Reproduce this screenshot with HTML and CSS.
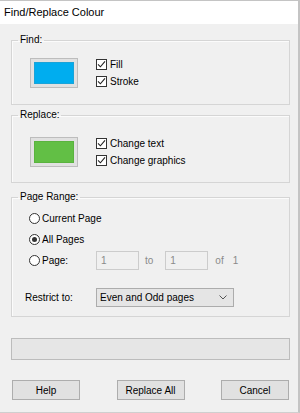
FILE: index.html
```html
<!doctype html>
<html>
  <head>
    <meta charset="utf-8">
    <title>Find/Replace Colour</title>
    <link rel="stylesheet" href="styles.css">
  </head>
  <body>
    <div class="window">
      <div class="titlebar">Find/Replace Colour</div>
      <div class="content">
        <fieldset class="group group-find">
          <legend>Find:</legend>
          <div class="swatch-row">
            <div class="swatch"><div class="swatch-fill blue"></div></div>
            <div class="checks">
              <label class="check-row"><span class="check"><svg width="9" height="9" viewBox="0 0 9 9"><path d="M1 4.3 L3.4 6.8 L8 1.3" fill="none" stroke="#222" stroke-width="1.1"/></svg></span>Fill</label>
              <label class="check-row"><span class="check"><svg width="9" height="9" viewBox="0 0 9 9"><path d="M1 4.3 L3.4 6.8 L8 1.3" fill="none" stroke="#222" stroke-width="1.1"/></svg></span>Stroke</label>
            </div>
          </div>
        </fieldset>

        <fieldset class="group group-replace">
          <legend>Replace:</legend>
          <div class="swatch-row">
            <div class="swatch"><div class="swatch-fill green"></div></div>
            <div class="checks">
              <label class="check-row"><span class="check"><svg width="9" height="9" viewBox="0 0 9 9"><path d="M1 4.3 L3.4 6.8 L8 1.3" fill="none" stroke="#222" stroke-width="1.1"/></svg></span>Change text</label>
              <label class="check-row"><span class="check"><svg width="9" height="9" viewBox="0 0 9 9"><path d="M1 4.3 L3.4 6.8 L8 1.3" fill="none" stroke="#222" stroke-width="1.1"/></svg></span>Change graphics</label>
            </div>
          </div>
        </fieldset>

        <fieldset class="group group-range">
          <legend>Page Range:</legend>
          <div class="range-body">
            <div class="radio-row"><span class="radio"></span>Current Page</div>
            <div class="radio-row"><span class="radio checked"></span>All Pages</div>
            <div class="radio-row">
              <span class="radio-label"><span class="radio"></span>Page:</span>
              <span class="num-box">1</span>
              <span class="muted to">to</span>
              <span class="num-box">1</span>
              <span class="muted of">of</span>
              <span class="muted">1</span>
            </div>
            <div class="restrict-row">
              <span class="restrict-label">Restrict to:</span>
              <div class="select">
                <span>Even and Odd pages</span>
                <svg width="8" height="5" viewBox="0 0 8 5"><path d="M0.5 0.5 L4 4 L7.5 0.5" fill="none" stroke="#555" stroke-width="1"/></svg>
              </div>
            </div>
          </div>
        </fieldset>

        <div class="progress"></div>

        <div class="buttons">
          <button>Help</button>
          <button>Replace All</button>
          <button>Cancel</button>
        </div>
      </div>
    </div>
  </body>
</html>
```

FILE: styles.css
```css
body {
  margin: 0;
  font-family: "Liberation Sans", Arial, sans-serif;
  font-size: 10px;
  color: #000;
}
.window {
  width: 300px;
  height: 413px;
  box-sizing: border-box;
  border-top: 1px solid #c4c4c4;
  border-right: 2px solid #c4c4c4;
  border-bottom: 1px solid #cfcfcf;
  background: #f0f0f0;
  display: flex;
  flex-direction: column;
}
.titlebar {
  height: 23px;
  line-height: 23px;
  padding-left: 4px;
  background: #fff;
  font-size: 11px;
}
.content {
  flex: 1;
  padding: 0 8px 0 11px;
}
.group {
  margin: 0;
  padding: 0;
  border: 1px solid #d5d5d5;
  box-shadow: inset 1px 1px 0 #fbfbfb;
}
.group legend {
  margin-left: 6px;
  padding: 0 2px;
  line-height: 12px;
}
.group-find {
  margin-top: 10px;
}
.group-replace {
  margin-top: 4px;
}
.group-range {
  margin-top: 8px;
}
.swatch-row {
  display: flex;
  align-items: center;
  gap: 18px;
  padding: 10px 0 14px 18px;
}
.group-replace .swatch-row {
  padding: 14px 0 13px 18px;
}
.swatch {
  width: 48px;
  height: 30px;
  box-sizing: border-box;
  padding: 3px;
  border: 1px solid #bdbdbd;
  background: #e1e1e1;
}
.swatch-fill {
  height: 100%;
  box-sizing: border-box;
}
.blue {
  background: #00adef;
  border: 1px solid #1aa3d8;
}
.green {
  background: #62bf45;
  border: 1px solid #5ab33f;
}
.check-row {
  display: flex;
  align-items: center;
  height: 17px;
  gap: 3px;
}
.check {
  width: 11px;
  height: 11px;
  box-sizing: border-box;
  border: 1px solid #333;
  background: #fff;
  display: flex;
}
.range-body {
  padding: 5px 0 9px 13px;
}
.radio-row {
  display: flex;
  align-items: center;
  height: 21px;
  padding-left: 4px;
}
.radio-label {
  display: flex;
  align-items: center;
  width: 67px;
}
.radio {
  width: 11px;
  height: 11px;
  box-sizing: border-box;
  border: 1px solid #333;
  border-radius: 50%;
  background: #fff;
  margin-right: 2px;
  display: flex;
  align-items: center;
  justify-content: center;
}
.radio.checked::after {
  content: "";
  width: 5px;
  height: 5px;
  border-radius: 50%;
  background: #333;
}
.num-box {
  width: 43px;
  height: 19px;
  box-sizing: border-box;
  border: 1px solid #cccccc;
  padding-left: 4px;
  line-height: 17px;
  color: #8a8a8a;
}
.muted {
  color: #8a8a8a;
}
.to {
  margin: 0 12px 0 6px;
}
.of {
  margin: 0 9px 0 7px;
}
.restrict-row {
  display: flex;
  align-items: center;
  margin-top: 17px;
  height: 19px;
}
.restrict-label {
  width: 71px;
}
.select {
  width: 138px;
  height: 19px;
  box-sizing: border-box;
  border: 1px solid #acacac;
  background: #e5e5e5;
  display: flex;
  align-items: center;
  justify-content: space-between;
  padding: 0 6px 0 3px;
}
.progress {
  margin-top: 21px;
  height: 22px;
  box-sizing: border-box;
  border: 1px solid #bcbcbc;
  background: #e6e6e6;
}
.buttons {
  display: flex;
  justify-content: space-between;
  margin: 20px 1px 0 1px;
}
button {
  width: 68px;
  height: 20px;
  border: 1px solid #adadad;
  background: #e1e1e1;
  font-family: inherit;
  font-size: 10px;
  color: #000;
  padding: 0;
}
```
